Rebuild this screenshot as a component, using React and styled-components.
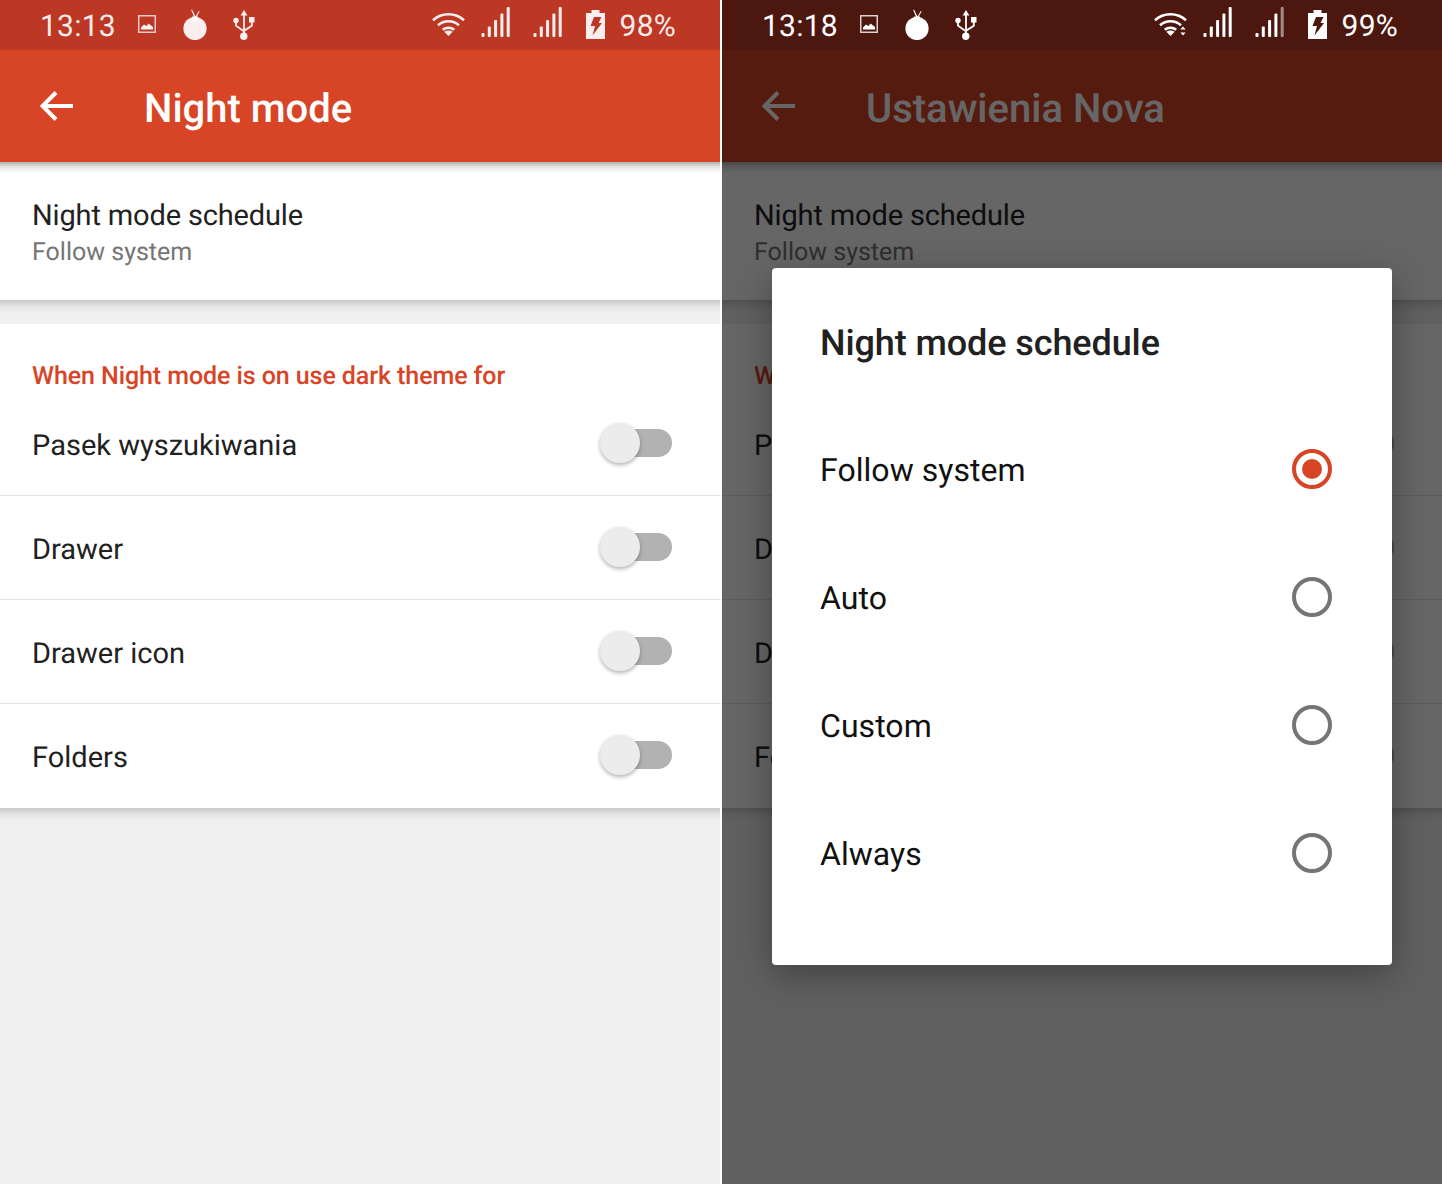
import React from "react";
import styled, { createGlobalStyle } from "styled-components";

const Global = createGlobalStyle`
  html, body { margin: 0; padding: 0; background: #fff; }
  body { font-family: Roboto, "Liberation Sans", sans-serif; -webkit-font-smoothing: antialiased; text-rendering: geometricPrecision; }
`;

const Page = styled.div`
  display: grid;
  grid-template-columns: 720px 720px;
  column-gap: 2px;
  width: 1442px;
  height: 1184px;
  overflow: hidden;
`;

const Phone = styled.div`
  display: flex;
  flex-direction: column;
  height: 1184px;
  overflow: hidden;
`;

const StatusBar = styled.div`
  flex: none;
  height: 50px;
  display: flex;
  align-items: center;
  justify-content: space-between;
  padding: 0 44px 0 40px;
  background: ${p => (p.$dim ? "#4b170f" : "#bc3825")};
  color: ${p => (p.$dim ? "#fff" : "rgba(255,255,255,.92)")};
`;

const StatusGroup = styled.div`
  display: flex;
  align-items: center;
`;

const StatusText = styled.span`
  font-size: 30px;
  line-height: 50px;
  letter-spacing: 0.25px;
  margin-left: ${p => p.$ml || 0}px;
  position: relative;
  top: 2px;
`;

const StatusIcon = styled.svg`
  display: block;
  flex: none;
  margin-left: ${p => p.$ml || 0}px;
  margin-bottom: ${p => p.$mb || 0}px;
  fill: currentColor;
  stroke: none;
`;

const Body = styled.div`
  position: relative;
  flex: 1;
  display: flex;
  flex-direction: column;
  background: #f0f0f0;
`;

const AppBar = styled.header`
  position: relative;
  z-index: 1;
  flex: none;
  height: 112px;
  display: flex;
  align-items: center;
  padding-left: 40px;
  background: #d84526;
  color: #fff;
  &::after {
    content: "";
    position: absolute;
    left: 0;
    right: 0;
    top: 100%;
    height: 11px;
    background: linear-gradient(rgba(0, 0, 0, 0.3), rgba(0, 0, 0, 0.1) 45%, rgba(0, 0, 0, 0));
  }
`;

const BackIcon = styled.svg`
  display: block;
  flex: none;
  fill: none;
  stroke: #fff;
  stroke-width: 4px;
`;

const Title = styled.h1`
  margin: 6px 0 0 71px;
  font-size: 40px;
  font-weight: 500;
  line-height: 44px;
`;

const Card = styled.section`
  position: relative;
  flex: none;
  background: #fff;
  margin-bottom: 24px;
  &::after {
    content: "";
    position: absolute;
    left: 0;
    right: 0;
    top: 100%;
    height: 13px;
    background: linear-gradient(rgba(0, 0, 0, 0.16), rgba(0, 0, 0, 0.05) 50%, rgba(0, 0, 0, 0));
  }
`;

const ScheduleRow = styled.div`
  height: 138px;
  box-sizing: border-box;
  padding: 35px 32px 0;
`;

const ScheduleTitle = styled.div`
  font-size: 29px;
  line-height: 38px;
  letter-spacing: -0.15px;
  color: #212121;
`;

const RowLabel = styled.div`
  font-size: 29px;
  line-height: 38px;
  color: #212121;
  position: relative;
  top: 2px;
`;

const RowSub = styled.div`
  font-size: 25px;
  line-height: 34px;
  margin-top: 1px;
  color: #757575;
`;

const SectionHead = styled.div`
  height: 68px;
  box-sizing: border-box;
  padding: 36px 32px 0;
  font-size: 25px;
  line-height: 34px;
  font-weight: 500;
  letter-spacing: -0.08px;
  color: #d84526;
`;

const ToggleRow = styled.div`
  display: flex;
  align-items: center;
  justify-content: space-between;
  box-sizing: border-box;
  height: 104px;
  padding: 0 48px 0 32px;
  border-bottom: ${p => (p.$last ? "none" : "1px solid #e3e3e3")};
`;

const Switch = styled.div`
  position: relative;
  width: 72px;
  height: 28px;
  top: -1px;
`;

const Track = styled.div`
  position: absolute;
  right: 0;
  top: 0;
  width: 52px;
  height: 28px;
  border-radius: 14px;
  background: #b2b2b2;
`;

const Thumb = styled.div`
  position: absolute;
  left: 0;
  top: -6px;
  width: 40px;
  height: 40px;
  border-radius: 50%;
  background: #ececec;
  box-shadow: 0 2px 4px rgba(0, 0, 0, 0.3);
`;

const Scrim = styled.div`
  position: absolute;
  inset: 0;
  z-index: 2;
  background: rgba(0, 0, 0, 0.6);
`;

const Dialog = styled.div`
  position: absolute;
  z-index: 3;
  left: 50px;
  top: 218px;
  width: 620px;
  height: 697px;
  box-sizing: border-box;
  padding: 52px 60px 0 48px;
  background: #fff;
  border-radius: 4px;
  box-shadow: 0 10px 36px rgba(0, 0, 0, 0.32);
`;

const DialogTitle = styled.h2`
  margin: 0 0 40px;
  font-size: 36px;
  line-height: 46px;
  font-weight: 500;
  letter-spacing: -0.1px;
  color: #212121;
`;

const Option = styled.div`
  display: flex;
  align-items: center;
  justify-content: space-between;
  height: 128px;
  font-size: 32px;
  letter-spacing: 0.05px;
  color: #111;
`;

const Radio = styled.div`
  position: relative;
  width: 40px;
  height: 40px;
  box-sizing: border-box;
  border-radius: 50%;
  border: 4px solid ${p => (p.$on ? "#d84526" : "#757575")};
  top: -1px;
  &::after {
    content: "";
    display: ${p => (p.$on ? "block" : "none")};
    position: absolute;
    inset: 6px;
    border-radius: 50%;
    background: #d84526;
  }
`;

const Picture = () => (
  <StatusIcon $ml={22} $mb={2} width="18" height="18" viewBox="0 0 18 18">
    <path fillRule="evenodd" d="M0 0h18v18H0zM1.500 1.500v15h15v-15z" opacity=".8" />
    <path d="M3 14.500v-2l3-3 2.500 1.500 2-2.500 4.500 3.500v2.500z" />
  </StatusIcon>
);

const Pear = () => (
  <StatusIcon $ml={27} $mb={1} width="24" height="31" viewBox="0 0 24 31">
    <circle cx="12" cy="19.500" r="11.600" />
    <path d="M9 7.500h6v5H9z" />
    <path d="M9 0.500l3.800 7.500-1.500.6L8.200 1zM15.800 2l.8.500-3.200 5.800-1-.6z" />
  </StatusIcon>
);

const Usb = () => (
  <StatusIcon $ml={26} width="22" height="30" viewBox="0 0 22 30">
    <path d="M11 0l3.400 5.500h-2.500V24h-1.800V5.500H7.600z" />
    <circle cx="10.800" cy="26.200" r="3.700" />
    <circle cx="3" cy="10.500" r="2.700" />
    <path d="M2.100 12h1.800v3.200l6 4.300v2.200l-7.800-5.600zM16 7h5.500v5.500h-1.800v3.800l-8 5.200v-2.200l6.200-4v-2.800H16z" />
  </StatusIcon>
);

const Wifi = ({ arrows }) => (
  <StatusIcon $ml={0} $mb={2} width="33" height="24" viewBox="0 0 33 24">
    <g fill="none" stroke="currentColor" strokeWidth="2.600">
      <path d="M1 8.200C9.500 0.300 23.500 0.300 32 8.200" />
      <path d="M6 13.200c6-5.300 15-5.300 21 0" />
      <path d="M10.800 17.800c3.300-2.800 8.100-2.800 11.400 0" />
    </g>
    <path d="M16.500 24l-4.200-4.200c2.400-1.700 6-1.700 8.400 0z" />
    {arrows && <path d="M29 14.500l2.700 3h-5.400zM29 23.500l-2.700-3h5.400z" />}
  </StatusIcon>
);

const Signal = ({ ml, fade }) => (
  <StatusIcon $ml={ml} $mb={6} width="29" height="30" viewBox="0 0 29 30">
    <rect x="0.500" y="26" width="3" height="4" rx="1" />
    <rect x="6.800" y="19.500" width="3" height="10.500" rx="1" />
    <rect x="13.100" y="13" width="3" height="17" rx="1" />
    <rect x="19.400" y="6.500" width="3" height="23.500" rx="1" />
    <rect x="25.700" y="0" width="3" height="30" rx="1" opacity={fade ? 0.5 : 1} />
  </StatusIcon>
);

const Battery = () => (
  <StatusIcon $ml={24} $mb={1} width="19" height="29" viewBox="0 0 19 29">
    <path
      fillRule="evenodd"
      d="M5.500 0h8v3H19v26H0V3h5.500zM8 7h7.500l-3 6H16L6.500 25.500 9 16H4.500z"
    />
  </StatusIcon>
);

const Screen = ({ dim, time, pct, title }) => (
  <Phone>
    <StatusBar $dim={dim}>
      <StatusGroup>
        <StatusText>{time}</StatusText>
        <Picture />
        <Pear />
        <Usb />
      </StatusGroup>
      <StatusGroup>
        <Wifi arrows={dim} />
        <Signal ml={16} />
        <Signal ml={23} fade={dim} />
        <Battery />
        <StatusText $ml={15}>{pct}</StatusText>
      </StatusGroup>
    </StatusBar>
    <Body>
      <AppBar>
        <BackIcon width="33" height="32" viewBox="0 0 33 32">
          <path d="M33 16H3M16 2.500L2.500 16 16 29.500" />
        </BackIcon>
        <Title>{title}</Title>
      </AppBar>
      <Card>
        <ScheduleRow>
          <ScheduleTitle>Night mode schedule</ScheduleTitle>
          <RowSub>Follow system</RowSub>
        </ScheduleRow>
      </Card>
      <Card>
        <SectionHead>When Night mode is on use dark theme for</SectionHead>
        {["Pasek wyszukiwania", "Drawer", "Drawer icon", "Folders"].map((label, i) => (
          <ToggleRow key={label} $last={i === 3}>
            <RowLabel>{label}</RowLabel>
            <Switch>
              <Track />
              <Thumb />
            </Switch>
          </ToggleRow>
        ))}
      </Card>
      {dim && <Scrim />}
      {dim && (
        <Dialog>
          <DialogTitle>Night mode schedule</DialogTitle>
          {["Follow system", "Auto", "Custom", "Always"].map((label, i) => (
            <Option key={label}>
              {label}
              <Radio $on={i === 0} />
            </Option>
          ))}
        </Dialog>
      )}
    </Body>
  </Phone>
);

export default function App() {
  return (
    <>
      <Global />
      <Page>
        <Screen time="13:13" pct="98%" title="Night mode" />
        <Screen dim time="13:18" pct="99%" title="Ustawienia Nova" />
      </Page>
    </>
  );
}
